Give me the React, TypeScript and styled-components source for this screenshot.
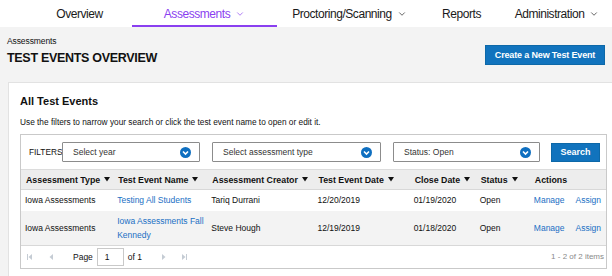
import styled, { createGlobalStyle } from 'styled-components';
import { ChevronDown } from 'lucide-react';

const GlobalStyle = createGlobalStyle`
  body {
    margin: 0;
    background: #f3f3f3;
    font-family: "Liberation Sans", Arial, sans-serif;
    color: #111;
    overflow: hidden;
  }
`;

const navItems = [
  { label: 'Overview', width: 132, pad: 27, menu: false },
  { label: 'Assessments', width: 145, pad: 0, menu: true, active: true },
  { label: 'Proctoring/Scanning', width: 145, pad: 0, menu: true },
  { label: 'Reports', width: 79, pad: 0, menu: false },
  { label: 'Administration', width: 112, pad: 0, menu: true },
];

const rows = [
  {
    type: 'Iowa Assessments',
    name: 'Testing All Students',
    creator: 'Tariq Durrani',
    date: '12/20/2019',
    close: '01/19/2020',
    status: 'Open',
  },
  {
    type: 'Iowa Assessments',
    name: 'Iowa Assessments Fall Kennedy',
    creator: 'Steve Hough',
    date: '12/19/2019',
    close: '01/18/2020',
    status: 'Open',
  },
];

const columns = [
  { label: 'Assessment Type', width: 92, sort: true },
  { label: 'Test Event Name', width: 94, sort: true },
  { label: 'Assessment Creator', width: 106, sort: true },
  { label: 'Test Event Date', width: 96, sort: true },
  { label: 'Close Date', width: 66, sort: true },
  { label: 'Status', width: 54, sort: true },
  { label: 'Actions', width: 76, sort: false },
];

function SelectChevron() {
  return (
    <svg width="11" height="11" viewBox="0 0 11 11">
      <circle cx="5.5" cy="5.5" r="5.5" fill="#0f6fc0" />
      <path d="M3 4.5 L5.5 7 L8 4.5" fill="none" stroke="#fff" strokeWidth="1.6" />
    </svg>
  );
}

function SortArrow() {
  return (
    <svg width="6" height="5" viewBox="0 0 6 5">
      <path d="M0 0 H6 L3 4.5 Z" fill="#111" />
    </svg>
  );
}

function PagerIcon({ dir, edge }: { dir: 'left' | 'right'; edge?: boolean }) {
  const tri = dir === 'left' ? 'M6 1 L2.5 4 L6 7 Z' : 'M2 1 L5.5 4 L2 7 Z';
  const bar = dir === 'left' ? 'M1.5 1 V7' : 'M6.5 1 V7';
  return (
    <svg width="8" height="8" viewBox="0 0 8 8">
      <path d={tri} fill="#c5ccd4" />
      {edge && <path d={bar} stroke="#c5ccd4" strokeWidth="1" />}
    </svg>
  );
}

export default function App() {
  return (
    <>
      <GlobalStyle />
      <Nav>
        {navItems.map((item) => (
          <NavItem key={item.label} $width={item.width} $pad={item.pad} $active={item.active}>
            {item.label}
            {item.menu && <ChevronDown size={10} strokeWidth={1.6} />}
          </NavItem>
        ))}
      </Nav>

      <PageHeader>
        <Breadcrumb>Assessments</Breadcrumb>
        <TitleRow>
          <Title>TEST EVENTS OVERVIEW</Title>
          <PrimaryButton>Create a New Test Event</PrimaryButton>
        </TitleRow>
      </PageHeader>

      <Card>
        <CardTitle>All Test Events</CardTitle>
        <Hint>Use the filters to narrow your search or click the test event name to open or edit it.</Hint>

        <Grid>
          <FilterRow>
            <FilterLabel>FILTERS</FilterLabel>
            <Select $width={138}>
              Select year
              <SelectChevron />
            </Select>
            <Select $width={169}>
              Select assessment type
              <SelectChevron />
            </Select>
            <Select $width={147}>
              Status: Open
              <SelectChevron />
            </Select>
            <SearchButton>Search</SearchButton>
          </FilterRow>

          <Table>
            <colgroup>
              {columns.map((c) => (
                <col key={c.label} style={{ width: c.width }} />
              ))}
            </colgroup>
            <thead>
              <tr>
                {columns.map((c) => (
                  <Th key={c.label}>
                    <HeadInner>
                      {c.label}
                      {c.sort && <SortArrow />}
                    </HeadInner>
                  </Th>
                ))}
              </tr>
            </thead>
            <tbody>
              {rows.map((r, i) => (
                <Tr key={r.name} $alt={i % 2 === 1}>
                  <Td>{r.type}</Td>
                  <Td>
                    <Link>{r.name}</Link>
                  </Td>
                  <Td>{r.creator}</Td>
                  <Td>{r.date}</Td>
                  <Td>{r.close}</Td>
                  <Td>{r.status}</Td>
                  <Td>
                    <Actions>
                      <Link>Manage</Link>
                      <Link>Assign</Link>
                    </Actions>
                  </Td>
                </Tr>
              ))}
            </tbody>
          </Table>

          <Pager>
            <PagerNav>
              <PagerIcon dir="left" edge />
              <PagerIcon dir="left" />
              <PageLabel>Page</PageLabel>
              <PageInput>1</PageInput>
              <PageLabel>of 1</PageLabel>
              <PagerIcon dir="right" />
              <PagerIcon dir="right" edge />
            </PagerNav>
            <PagerInfo>1 - 2 of 2 items</PagerInfo>
          </Pager>
        </Grid>
      </Card>
    </>
  );
}

const Nav = styled.nav`
  display: flex;
  height: 27px;
  background: #fff;
`;

const NavItem = styled.div<{ $width: number; $pad: number; $active?: boolean }>`
  box-sizing: border-box;
  width: ${(p) => p.$width}px;
  flex: none;
  padding-left: ${(p) => p.$pad}px;
  display: flex;
  align-items: center;
  justify-content: center;
  gap: 5px;
  font-size: 12px;
  letter-spacing: -0.45px;
  color: ${(p) => (p.$active ? '#8a3ff0' : '#1a1a1a')};
  border-bottom: 2px solid ${(p) => (p.$active ? '#8a3ff0' : 'transparent')};
  padding-top: 2px;

  svg {
    margin-top: 1px;
  }
`;

const PageHeader = styled.header`
  padding: 9px 7px 0;
`;

const Breadcrumb = styled.div`
  font-size: 8.5px;
  line-height: 10px;
  letter-spacing: -0.1px;
`;

const TitleRow = styled.div`
  display: flex;
  justify-content: space-between;
  align-items: flex-start;
  margin-top: -1px;
`;

const Title = styled.h1`
  margin: 0;
  padding-top: 5px;
  font-size: 12.5px;
  line-height: 16px;
  font-weight: 700;
  letter-spacing: -0.3px;
`;

const PrimaryButton = styled.button`
  width: 120px;
  height: 20px;
  border: 1px solid #0d68a8;
  background: #1173bd;
  color: #fff;
  font-family: inherit;
  font-size: 9px;
  font-weight: 700;
  letter-spacing: -0.15px;
  padding: 0;
`;

const Card = styled.section`
  margin: 16px 0 0 8px;
  width: 620px;
  box-sizing: border-box;
  background: #fff;
  border: 1px solid #e2e2e2;
  padding: 12px 11px 20px;
`;

const CardTitle = styled.h2`
  margin: 0;
  font-size: 11px;
  line-height: 13px;
  font-weight: 700;
`;

const Hint = styled.p`
  margin: 9px 0 0;
  font-size: 8.3px;
  line-height: 10px;
`;

const Grid = styled.div`
  margin-top: 7px;
  width: 587px;
  box-sizing: border-box;
  border: 1px solid #c9c9c9;
`;

const FilterRow = styled.div`
  display: flex;
  align-items: center;
  height: 34px;
  padding: 0 0 0 8px;
  border-bottom: 1px solid #dcdcdc;
`;

const FilterLabel = styled.span`
  font-size: 8.3px;
  width: 33px;
`;

const Select = styled.div<{ $width: number }>`
  box-sizing: border-box;
  width: ${(p) => p.$width}px;
  height: 20px;
  margin-right: 12px;
  border: 1px solid #8c8c8c;
  border-radius: 1px;
  display: flex;
  align-items: center;
  justify-content: space-between;
  padding: 0 8px 0 10px;
  font-size: 8.5px;
  color: #333;
`;

const SearchButton = styled.button`
  width: 49px;
  height: 19px;
  margin-left: -1px;
  border: 1px solid #0d68a8;
  background: #1173bd;
  color: #fff;
  font-family: inherit;
  font-size: 9px;
  font-weight: 700;
  padding: 0;
`;

const Table = styled.table`
  width: 100%;
  border-collapse: collapse;
  table-layout: fixed;
  font-size: 8.5px;
`;

const Th = styled.th`
  background: #ededed;
  height: 19px;
  padding: 0 0 0 5px;
  text-align: left;
  font-size: 8.8px;
  font-weight: 700;
  border-bottom: 1px solid #d8d8d8;
  white-space: nowrap;
`;

const HeadInner = styled.span`
  display: inline-flex;
  align-items: center;
  gap: 4px;
`;

const Tr = styled.tr<{ $alt: boolean }>`
  background: ${(p) => (p.$alt ? '#f3f3f3' : '#fff')};
  height: ${(p) => (p.$alt ? 34 : 21)}px;
`;

const Td = styled.td`
  padding: 0 0 0 4px;
  line-height: 14px;
  vertical-align: middle;
`;

const Link = styled.a`
  color: #1a6fc4;
  cursor: pointer;
`;

const Actions = styled.div`
  display: flex;
  gap: 11px;
`;

const Pager = styled.div`
  display: flex;
  align-items: center;
  justify-content: space-between;
  height: 22px;
  border-top: 1px solid #d8d8d8;
  padding: 0 2px 0 5px;
`;

const PagerNav = styled.div`
  display: flex;
  align-items: center;

  & > svg:nth-child(1) {
    margin-right: 13px;
  }
  & > svg:nth-child(2) {
    margin-right: 18px;
  }
  & > svg:nth-child(6) {
    margin-left: 18px;
    margin-right: 12px;
  }
`;

const PageLabel = styled.span`
  font-size: 8.5px;
`;

const PageInput = styled.span`
  box-sizing: border-box;
  width: 27px;
  height: 18px;
  margin: 0 4px;
  border: 1px solid #c9c9c9;
  display: flex;
  align-items: center;
  padding-left: 7px;
  font-size: 8.5px;
`;

const PagerInfo = styled.span`
  font-size: 8px;
  color: #8a8a8a;
`;
